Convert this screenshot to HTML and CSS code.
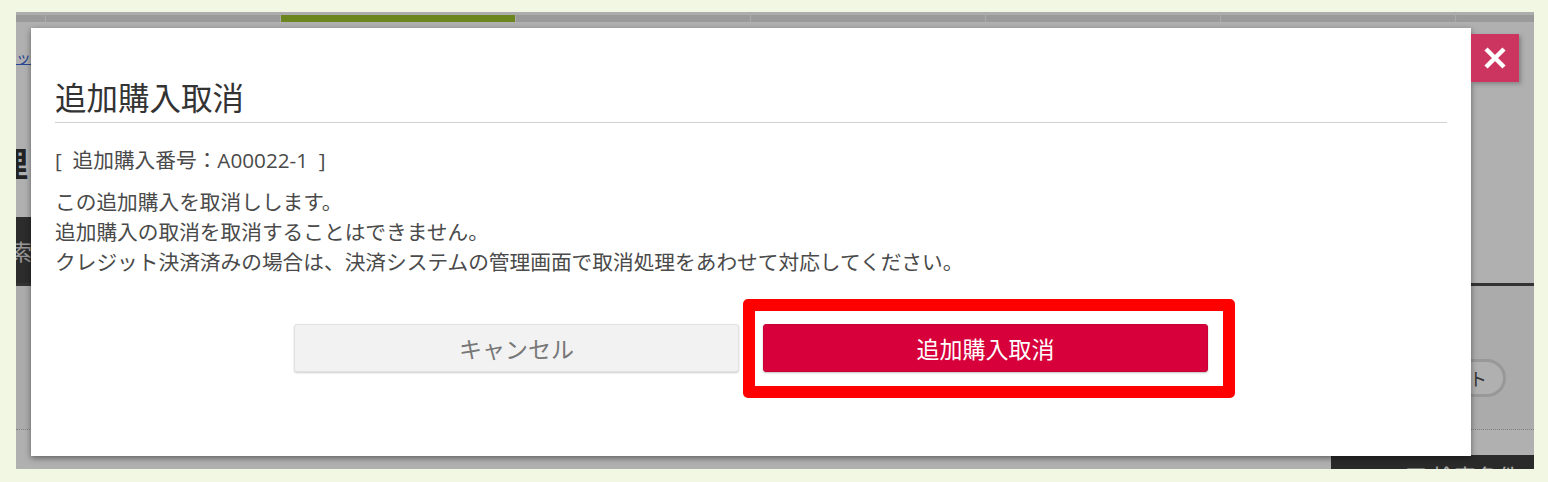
FILE: index.html
```html
<!DOCTYPE html>
<html lang="ja">
<head>
    <meta charset="UTF-8">
    <meta name="viewport" content="width=device-width, initial-scale=1.0">
    <title>追加購入取消</title>
    <link rel="stylesheet" href="styles.css">
</head>
<body>

    <div class="page">
        <div class="tabs">
            <div class="tab"></div>
            <div class="tab"></div>
            <div class="tab active"></div>
            <div class="tab"></div>
            <div class="tab"></div>
            <div class="tab"></div>
            <div class="tab"></div>
            <div class="tab"></div>
        </div>

        <div class="crumb"><a href="#">ショッピング</a></div>
        <h1 class="heading">管理</h1>

        <div class="tabrow">
            <div class="tabrow-item">検索</div>
        </div>
        <div class="panel">
            <button class="pill">リセット</button>
        </div>
        <div class="foot">
            <div class="foot-bar">■ 検索条件</div>
        </div>

        <div class="shade"></div>

        <div class="modal">
            <h2 class="modal-title">追加購入取消</h2>
            <div class="modal-body">
                <p class="order-no">[&nbsp; 追加購入番号：A00022-1 &nbsp;]</p>
                <p class="message">
                    この追加購入を取消しします。<br>
                    追加購入の取消を取消することはできません。<br>
                    クレジット決済済みの場合は、決済システムの管理画面で取消処理をあわせて対応してください。
                </p>
            </div>
            <div class="actions">
                <button class="btn btn-cancel">キャンセル</button>
                <div class="mark-wrap">
                    <button class="btn btn-submit">追加購入取消</button>
                    <div class="mark"></div>
                </div>
            </div>
            <button class="close" aria-label="閉じる">
                <svg width="22" height="22" viewBox="0 0 22 22">
                    <path d="M2 2 L20 20 M20 2 L2 20" stroke="#fff" stroke-width="4.5" fill="none"/>
                </svg>
            </button>
        </div>
    </div>

</body>
</html>
```

FILE: styles.css
```css
body {
    margin: 0;
    background-color: #f2f7e4;
    font-family: "Noto Sans CJK JP", "Noto Sans", sans-serif;
    color: #4a4a4a;
}
.page {
    position: relative;
    margin: 12px 14px 0 16px;
    height: 457px;
    background: #fff;
    overflow: hidden;
}

/* page behind the dialog */
.tabs {
    display: flex;
    margin-left: -206px;
}
.tab {
    flex: 0 0 234px;
    height: 7px;
    border-top: 3px solid #fbfbfb;
    border-left: 1px solid #f6f6f6;
    background: #dfdfdf;
}
.tab.active {
    background: #9bc12e;
}
.crumb {
    margin: 25px 0 0 -30px;
    font-size: 15px;
    line-height: 20px;
}
.crumb a {
    color: #3a66d8;
}
.heading {
    margin: 74px 0 0 -56px;
    font-size: 34px;
    line-height: 44px;
    font-weight: bold;
    color: #333;
}
.tabrow {
    display: flex;
    margin-top: 32px;
    border-bottom: 3px solid #4a4a4a;
}
.tabrow-item {
    margin-left: -60px;
    padding: 0 24px 0 32px;
    height: 66px;
    line-height: 66px;
    font-size: 22px;
    background: #404040;
    color: #ddd;
}
.panel {
    display: flex;
    justify-content: flex-end;
    padding: 73px 28px 32px 0;
    background: #f8f8f8;
    border-bottom: 1px dotted #bbb;
}
.pill {
    height: 38px;
    padding: 0 16px 0 24px;
    border: 3px solid #dcdcdc;
    border-radius: 19px;
    background: #fff;
    font-family: inherit;
    font-size: 18px;
    color: #4a4a4a;
}
.foot {
    display: flex;
    justify-content: flex-end;
    margin-top: 25px;
}
.foot-bar {
    width: 129px;
    height: 40px;
    padding-left: 74px;
    line-height: 40px;
    font-size: 22px;
    background: #3e3e3e;
    color: #fff;
}
.shade {
    position: absolute;
    top: 0;
    right: 0;
    bottom: 0;
    left: 0;
    background: rgba(0, 0, 0, 0.31);
}

/* dialog */
.modal {
    position: absolute;
    top: 16px;
    left: 15px;
    width: 1392px;
    padding: 48px 24px 84px;
    background: #fff;
    box-shadow: 0 2px 6px rgba(0, 0, 0, 0.45);
}
.modal-title {
    margin: 0;
    font-size: 31.5px;
    line-height: 40px;
    font-weight: normal;
    color: #333;
    padding-bottom: 6px;
    border-bottom: 1px solid #d0d0d0;
}
.modal-body {
    font-size: 20.7px;
    line-height: 30px;
}
.order-no {
    margin: 22px 0 0;
    font-family: "Open Sans", "Noto Sans CJK JP", sans-serif;
}
.message {
    margin: 11px 0 0;
}
.actions {
    display: flex;
    justify-content: center;
    gap: 24px;
    margin-top: 48px;
}
.btn {
    width: 445px;
    height: 48px;
    border-radius: 3px;
    font-family: inherit;
    font-size: 23px;
    cursor: pointer;
}
.btn-cancel {
    background: #f2f2f2;
    border: 1px solid #e2e2e2;
    color: #777;
    box-shadow: 0 1px 2px rgba(0, 0, 0, 0.2);
}
.btn-submit {
    background: #d7003b;
    border: 1px solid #c70036;
    color: #fff;
    box-shadow: 0 1px 2px rgba(0, 0, 0, 0.25);
}
.mark-wrap {
    position: relative;
}
.mark {
    position: absolute;
    top: -25px;
    right: -27px;
    bottom: -26px;
    left: -20px;
    border: 12px solid #ff0000;
    border-radius: 5px;
}
.close {
    position: absolute;
    top: 6px;
    right: -48px;
    width: 48px;
    height: 48px;
    padding: 0;
    border: none;
    background: #cd3561;
    box-shadow: 2px 2px 4px rgba(0, 0, 0, 0.25);
    display: flex;
    align-items: center;
    justify-content: center;
}
.close svg {
    display: block;
}
```
